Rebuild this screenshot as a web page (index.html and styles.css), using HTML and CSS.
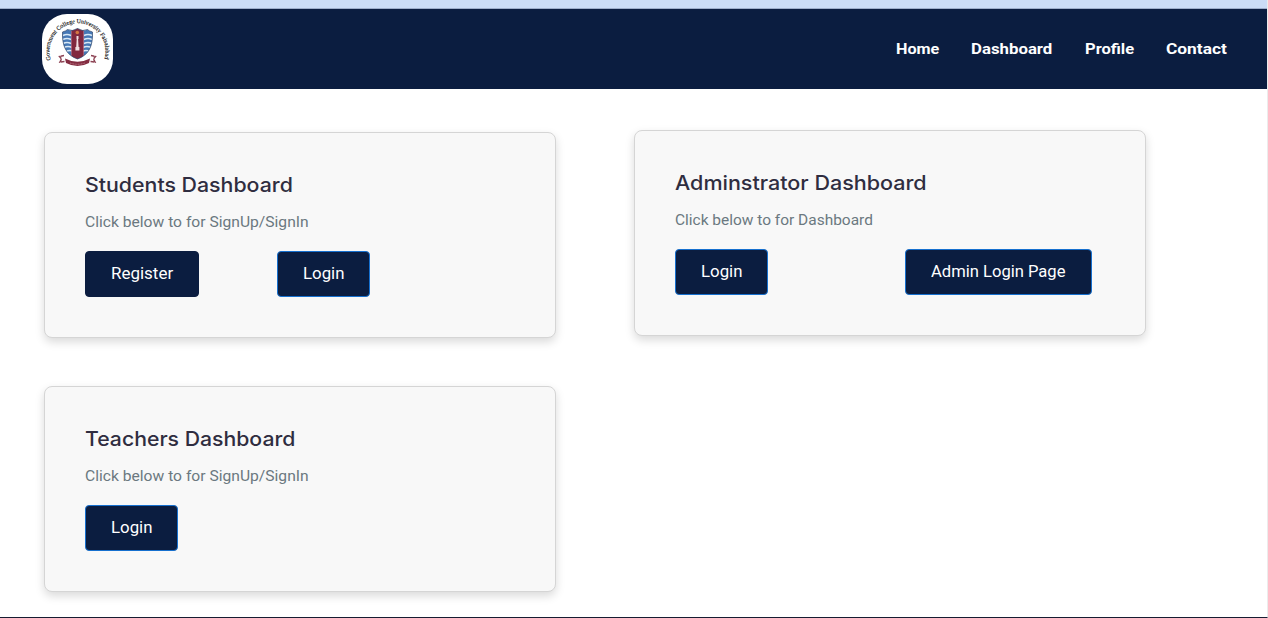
FILE: index.html
```html
<!DOCTYPE html>
<html lang="en">
<head>
<meta charset="utf-8">
<title>Dashboard</title>
<link rel="stylesheet" href="styles.css">
</head>
<body>
<div class="page">
  <div class="topbar"></div>
  <header class="header">
    <a class="logo">
      <svg width="71" height="70" viewBox="0 0 71 70">
        <defs>
          <path id="arc" d="M8.9 45.900A28 28 0 1 1 62.100 45.900"/>
          <clipPath id="shield"><path d="M20.5 18Q24 17 25.500 15.500Q30 18 35.500 14.500Q41 18 45.500 15.500Q47 17 50.500 18C51 32 47 41 35.500 45C24 41 20 32 20.500 18Z"/></clipPath>
        </defs>
        <text class="logo-text"><textPath href="#arc">Government College University Faisalabad</textPath></text>
        <g clip-path="url(#shield)">
          <rect x="19" y="13" width="33" height="34" fill="#4779b6"/>
          <path d="M21 21.500q4-2 8 0M21 25.500q4-2 8 0M21 29.500q4-2 8 0M22 33.500q4-2 8 0M24 37.500q4-2 8 0M42 21.500q4-2 8 0M42 25.500q4-2 8 0M42 29.500q4-2 8 0M41 33.500q4-2 8 0M40 37.500q4-2 8 0" fill="none" stroke="#d9e9f6" stroke-width="1.500"/>
          <path d="M29.500 13h12v34h-12z" fill="#81283f"/>
          <path d="M29.500 15v28M41.500 15v28" stroke="#bf6575" stroke-width=".6"/>
        </g>
        <path d="M20.500 18Q24 17 25.500 15.500Q30 18 35.500 14.500Q41 18 45.500 15.500Q47 17 50.500 18C51 32 47 41 35.500 45C24 41 20 32 20.500 18Z" fill="none" stroke="#33496b" stroke-width=".7"/>
        <circle cx="35.300" cy="18.500" r="1.800" fill="#d47742"/>
        <path d="M34.500 22h2v3h-.4l.5 8h.8v3.500h-4V33h.8l.5-8h-.2z" fill="#f1dfe3"/>
        <path d="M22 41.500l-4.500 1 2 2.500-1.500 3 5-.5M49 41.500l4.500 1-2 2.500 1.500 3-5-.5" fill="none" stroke="#8d4354" stroke-width="1.500" stroke-dasharray="3.500 .5"/>
        <path d="M23 44.500Q35.500 51 48 44.500L47 49Q35.500 55 24 49Z" fill="#842d42"/>
        <path d="M28 49Q35.500 51.500 43 49" fill="none" stroke="#c98e99" stroke-width=".8" stroke-dasharray="1 .6"/>
      </svg>
    </a>
    <nav class="nav">
      <a class="nav-home"><span class="t-home">Home</span></a>
      <a class="nav-dash"><span class="t-navdash">Dashboard</span></a>
      <a class="nav-profile"><span class="t-profile">Profile</span></a>
      <a class="nav-contact"><span class="t-contact">Contact</span></a>
    </nav>
  </header>
  <main class="cards">
    <section class="card">
      <h2><span class="t-students">Students Dashboard</span></h2>
      <p><span class="t-sign">Click below to for SignUp/SignIn</span></p>
      <div class="actions">
        <a class="btn btn-plain"><span class="t-register">Register</span></a>
        <a class="btn btn-login"><span class="t-login">Login</span></a>
      </div>
    </section>
    <section class="card card-admin">
      <h2><span class="t-admin">Adminstrator Dashboard</span></h2>
      <p><span class="t-dash">Click below to for Dashboard</span></p>
      <div class="actions actions-wide">
        <a class="btn btn-login"><span class="t-login">Login</span></a>
        <a class="btn btn-admin"><span class="t-adminpage">Admin Login Page</span></a>
      </div>
    </section>
    <section class="card">
      <h2><span class="t-teachers">Teachers Dashboard</span></h2>
      <p><span class="t-sign">Click below to for SignUp/SignIn</span></p>
      <div class="actions">
        <a class="btn btn-login"><span class="t-login">Login</span></a>
      </div>
    </section>
  </main>
</div>
</body>
</html>
```
FILE: styles.css
```css
* { box-sizing: border-box; }
body { margin: 0; background: #fff; font-family: Roboto, "Liberation Sans", sans-serif; }
.page { height: 618px; overflow: hidden; border-right: 1px solid #ececec; border-bottom: 1px solid #171c31; display: flex; flex-direction: column; }
.topbar { height: 9px; flex: none; background: #cbdcf6; border-bottom: 1px solid #9dadca; }
.header { height: 80px; flex: none; background: #0b1d40; display: flex; justify-content: space-between; align-items: flex-start; padding: 5px 40px 0 42px; }
.logo { width: 71px; height: 70px; border-radius: 25px; background: #fff; overflow: hidden; }
.logo svg { display: block; }
.logo-text { font-family: "Liberation Serif", serif; font-size: 6px; fill: #111; stroke: #111; stroke-width: .15px; }
.nav { display: flex; gap: 32px; height: 70px; align-items: center; color: #fff; font-size: 15px; font-weight: 700; white-space: nowrap; }
.nav span, .card span { display: inline-block; transform-origin: 0 50%; }
.nav-home { width: 43px; }
.nav-dash { width: 82px; }
.nav-profile { width: 49px; }
.nav-contact { width: 61px; }
.nav .t-home { transform: scaleX(1.08); }
.nav .t-navdash { transform: scaleX(1.12); }
.nav .t-profile { transform: scaleX(1.1); }
.nav .t-contact { transform: scaleX(1.155); }
.cards { display: grid; grid-template-columns: 512px 512px; column-gap: 78px; row-gap: 48px; padding: 43px 0 0 44px; align-items: start; }
.card { height: 206px; padding: 40px; background: #f8f8f8; border: 1px solid #d5d5d5; border-radius: 8px; box-shadow: 0 4px 10px rgba(0, 0, 0, .15); white-space: nowrap; }
.card-admin { margin-top: -2px; }
.card h2 { margin: 0; font: 500 20px/24px Inter, sans-serif; color: #2f2d40; }
.t-students { transform: scaleX(1.066); }
.t-admin { transform: scaleX(1.076); }
.t-teachers { transform: scaleX(1.061); }
.card p { margin: 15px 0 0; font-size: 15px; line-height: 20px; color: #6b7880; }
.t-sign { transform: scaleX(1.042); }
.t-dash { transform: scaleX(1.031); }
.actions { display: flex; gap: 78px; margin-top: 19px; }
.actions-wide { gap: 137px; }
.btn { height: 46px; display: flex; align-items: center; padding: 0 0 1px 25px; border: 1px solid #1670cf; border-radius: 4px; background: #0b1d40; color: #fff; font-size: 16px; }
.btn-plain { width: 114px; border-color: #0b1d40; }
.btn-login { width: 93px; }
.btn-admin { width: 187px; }
.t-register { transform: scaleX(1.06); }
.t-login { transform: scaleX(1.05); }
.t-adminpage { transform: scaleX(1.036); }
```
